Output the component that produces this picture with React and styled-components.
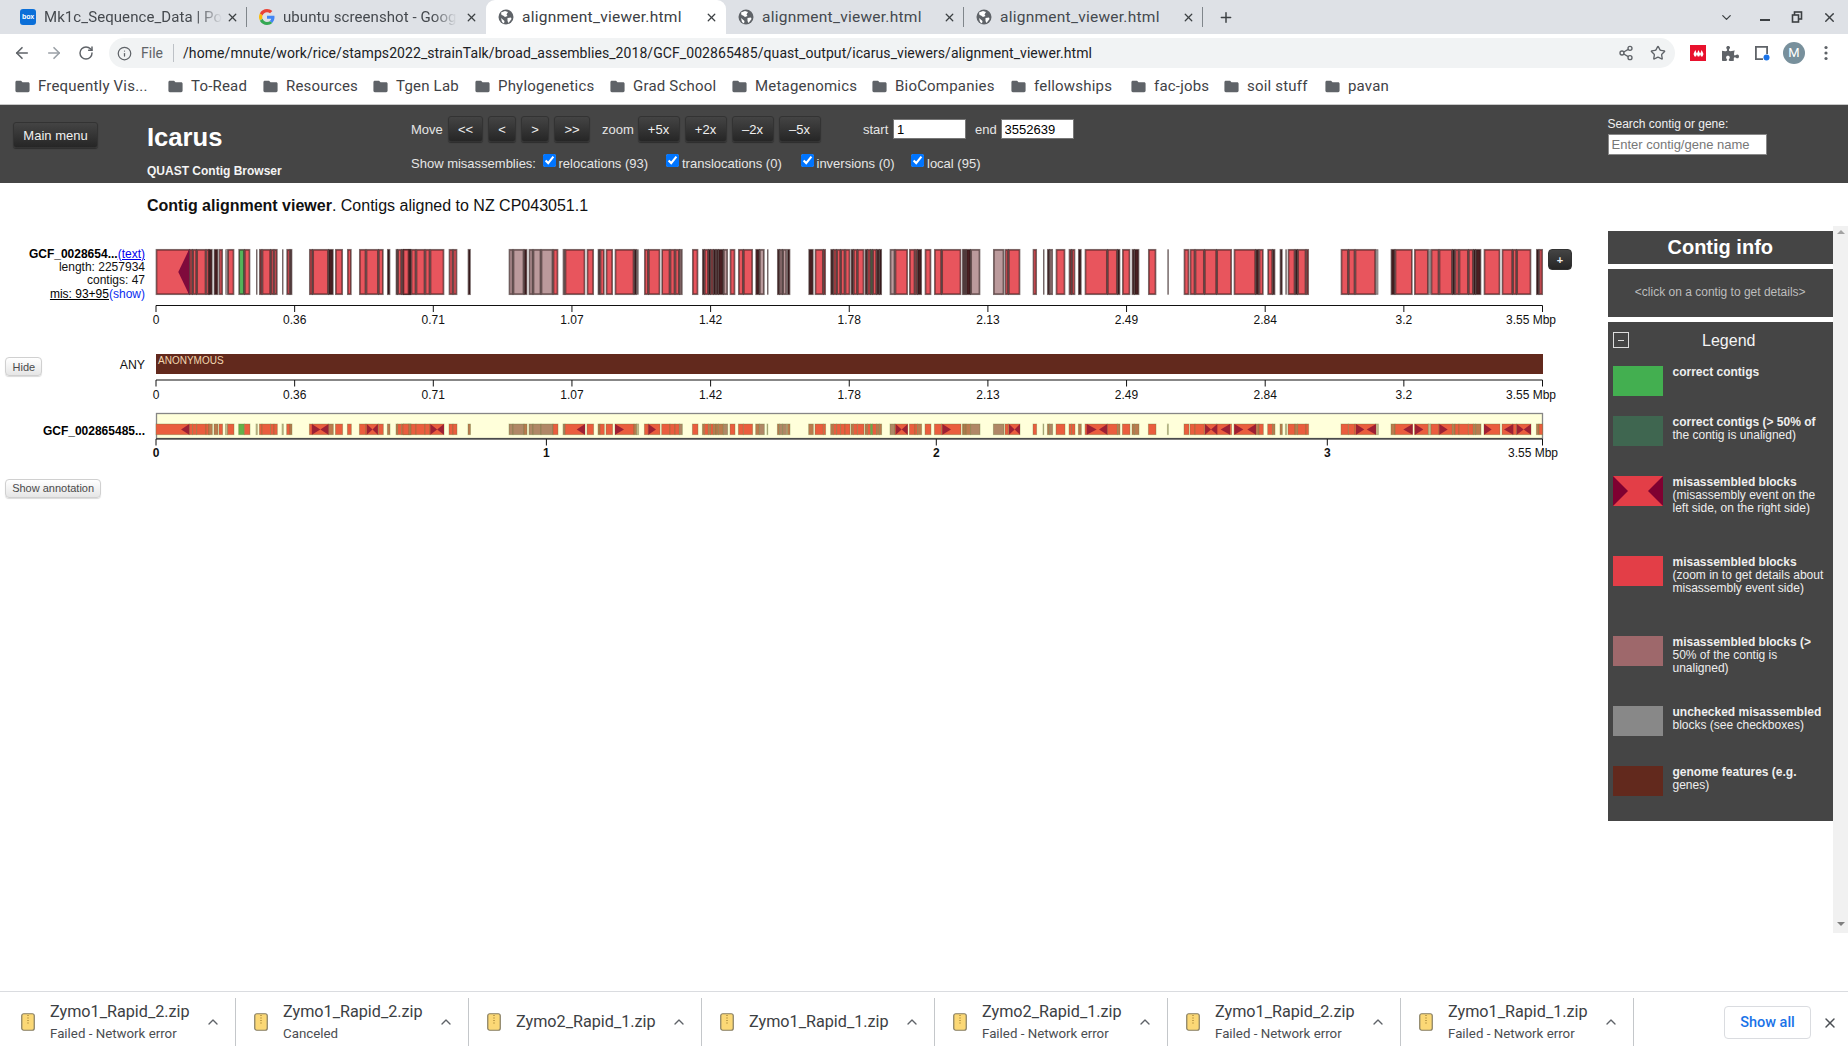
import React from "react";
import styled, { createGlobalStyle } from "styled-components";
import { ArrowLeft, ArrowRight, RotateCw, Info, Share2, Star, X, Plus, ChevronDown, ChevronUp } from "lucide-react";
import { MdFolder } from "react-icons/md";
import { FaPuzzlePiece } from "react-icons/fa";

const UI = `Roboto, "Noto Sans", sans-serif`;

const Global = createGlobalStyle`
  html, body { margin: 0; padding: 0; height: 100%; overflow: hidden; background: #fff; }
  body { font-family: "Liberation Sans", Arial, sans-serif; }
  * { box-sizing: border-box; }
`;

const Page = styled.div`
  width: 1848px; height: 1053px; display: flex; flex-direction: column;
`;

/* ---------- tab strip ---------- */
const TabStrip = styled.div`
  height: 34px; background: #dee1e6; display: flex; align-items: stretch; padding-left: 8px;
  font-family: ${UI}; font-size: 15.5px; letter-spacing: 0.25px; color: #3c4043; flex: none;
`;
const Tab = styled.div`
  position: relative; width: ${p => p.$w}px; display: flex; align-items: center; padding: 0 7px 0 12px;
  background: ${p => (p.$active ? "#fff" : "transparent")};
  border-radius: ${p => (p.$active ? "9px 9px 0 0" : "0")};
  color: ${p => (p.$active ? "#3c4043" : "#45494e")};
  &::after {
    content: ""; position: absolute; right: 0; top: 7px; height: 20px; width: 1px;
    background: ${p => (p.$sep ? "#80868b" : "transparent")};
  }
`;
const TabIcon = styled.span`
  width: 16px; height: 16px; flex: none; display: flex; align-items: center; justify-content: center;
  margin-right: 8px;
`;
const TabTitle = styled.span`
  flex: 1; white-space: nowrap;
`;
const FadedTitle = styled.span`
  white-space: nowrap; font-size: 15px; letter-spacing: 0.08px;
  mask-image: linear-gradient(to right, #000 86%, transparent 100%);
`;
const TitleBox = styled.span`
  flex: 1; min-width: 0; display: flex;
`;
const TabClose = styled.span`
  width: 16px; height: 16px; flex: none; display: flex; align-items: center; justify-content: center; color: #3c4043;
`;
const NewTab = styled.span`
  margin-left: 15px; width: 16px; display: flex; align-items: center; justify-content: center; color: #3c4043;
`;
const WindowControls = styled.div`
  margin-left: auto; display: flex; align-items: center; padding-right: 2px;
`;
const WindowBtn = styled.span`
  width: 32.6px; height: 34px; display: flex; align-items: center; justify-content: center; color: #3c4043;
  margin-right: ${p => p.$mr || 0}px;
`;
const BoxIcon = styled.span`
  width: 16px; height: 16px; border-radius: 3px; background: #0b6fd8; color: #fff; font: 700 7px/16px "Liberation Sans", sans-serif;
  text-align: center; letter-spacing: -0.2px;
`;

/* ---------- toolbar ---------- */
const Toolbar = styled.div`
  height: 38px; background: #fff; display: flex; align-items: center; padding-left: 6px; flex: none;
  font-family: ${UI};
`;
const NavBtn = styled.span`
  width: 32px; height: 30px; display: flex; align-items: center; justify-content: center;
  color: ${p => p.$off ? "#9aa0a6" : "#5f6368"};
`;
const Omnibox = styled.div`
  width: 1566px; height: 30px; margin-left: 7px; margin-right: 7px; background: #f1f3f4; border-radius: 15px;
  display: flex; align-items: center; padding: 0 1px 0 8px; font-size: 14px; color: #202124;
`;
const OmniFile = styled.span`
  color: #5f6368; margin-left: 9px; width: 32px;
`;
const OmniSep = styled.span`
  width: 1px; height: 18px; background: #bdc1c6;
`;
const OmniUrl = styled.span`
  flex: 1; margin-left: 9px; white-space: nowrap; letter-spacing: 0.075px;
`;
const OmniAction = styled.span`
  width: 32px; display: flex; align-items: center; justify-content: center; color: #5f6368;
`;
const Extension = styled.span`
  width: 32px; height: 30px; display: flex; align-items: center; justify-content: center; color: #5f6368;
`;
const MendeleyIcon = styled.span`
  width: 16px; height: 16px; background: #e8112d; display: flex; align-items: center; justify-content: center;
`;
const Avatar = styled.span`
  width: 22px; height: 22px; border-radius: 50%; background: #78909c; color: #fff; font: 13px/22px ${UI}; text-align: center;
`;

/* ---------- bookmarks ---------- */
const Bookmarks = styled.div`
  height: 33px; background: #fff; display: flex; align-items: center; padding: 0 0 4px 14px; flex: none;
  border-bottom: 1px solid #c8c8c8; font-family: ${UI}; font-size: 15px; letter-spacing: 0.2px; color: #3c4043;
`;
const Bookmark = styled.span`
  width: ${p => p.$w}px; flex: none; display: flex; align-items: center; gap: 7px; white-space: nowrap; color: #3f4246;
  svg { color: #5f6368; flex: none; }
`;

/* ---------- icarus header ---------- */
const Header = styled.div`
  height: 78px; background: #454545; display: flex; flex: none; color: #e6e6e6; font-size: 13px;
`;
const MenuCol = styled.div`
  width: 147px; padding: 17px 0 0 13px;
`;
const DarkButton = styled.button`
  width: ${p => p.$w}px; height: ${p => p.$h || 26}px; padding: 0; border: 1px solid #333; border-radius: 3px;
  background: linear-gradient(#444444, #262626); color: #f0f0f0;
  font: 13px "Liberation Sans", sans-serif; box-shadow: 0 1px 1px rgba(0,0,0,.35);
`;
const BrandCol = styled.div`
  width: 264px; padding-top: 17px;
`;
const Brand = styled.div`
  font-size: 25.6px; font-weight: 700; line-height: 30px; color: #fff;
`;
const SubBrand = styled.div`
  margin-top: 12px; font-size: 12px; font-weight: 700; line-height: 14px; color: #f4f4f4;
`;
const Controls = styled.div`
  flex: 1; padding-top: 11px;
`;
const ControlRow = styled.div`
  display: flex; align-items: center; height: 26px;
`;
const CtlText = styled.span`
  width: ${p => p.$w}px; margin-left: ${p => p.$ml || 0}px; flex: none; white-space: nowrap;
`;
const BtnGroup = styled.div`
  display: flex; gap: 5px;
`;
const RangeInput = styled.input`
  width: ${p => p.$w}px; height: 20px; border: 1px solid #777; padding: 0 3px; background: #fff; color: #000;
  font: 13px "Liberation Sans", sans-serif; outline: none;
`;
const MisRow = styled.div`
  display: flex; align-items: center; height: 14px; margin-top: 14px;
`;
const CheckItem = styled.label`
  width: ${p => p.$w}px; flex: none; display: flex; align-items: center; gap: 3px; white-space: nowrap;
  input { margin: -5px 0 0; width: 13px; height: 13px; accent-color: #0075ff; }
`;
const SearchCol = styled.div`
  width: 240.5px; padding-top: 12px; font-size: 12px; line-height: 14px; color: #f0f0f0;
`;
const SearchInput = styled.input`
  display: block; margin-top: 3px; width: 159px; height: 21px; border: 1px solid #888; padding: 0 3px;
  font: 13px "Liberation Sans", sans-serif; background: #fff;
  &::placeholder { color: #777; opacity: 1; }
`;

/* ---------- body ---------- */
const Body = styled.div`
  flex: 1; min-height: 0; display: flex; background: #fff;
`;
const Main = styled.div`
  width: 1607.5px; flex: none; padding-top: 13px;
`;
const Title = styled.div`
  padding-left: 147px; font-size: 16px; line-height: 20px; color: #111; margin-bottom: 33px;
  b { font-weight: 700; }
`;
const TrackRow = styled.div`
  display: flex; align-items: flex-start; margin-bottom: ${p => p.$mb || 0}px;
`;
const LabelCol = styled.div`
  width: 156px; flex: none; padding-right: 11px; text-align: right; font-size: 12px; line-height: 13.4px; color: #111;
  padding-top: ${p => p.$pt || 0}px; margin-top: ${p => p.$mt || 0}px;
  b { font-weight: 700; color: #000; }
  a { color: #0000ee; text-decoration: underline; }
`;
const MisLink = styled.span`
  text-decoration: underline; color: #000;
`;
const ShowLink = styled.a`
  color: #0a2cf0 !important; text-decoration: none !important;
`;
const HideLine = styled.div`
  display: flex; align-items: center; justify-content: space-between; padding: 3.2px 0 0 5.4px;
`;
const LightButton = styled.button`
  width: ${p => p.$w}px; height: 19px; padding: 0; border: 1px solid #d0d0d0; border-radius: 4px;
  background: linear-gradient(#ffffff, #e6e6e6); color: #4a4a4a; font: 11px "Liberation Sans", sans-serif;
  box-shadow: 0 1px 1px rgba(0,0,0,.15);
`;
const AnyText = styled.span`
  font-size: 12.3px; line-height: 14px; color: #111; margin-top: -4px;
`;
const Chart = styled.svg`
  display: block; flex: none; overflow: visible; font-family: "Liberation Sans", sans-serif;
`;
const PlusButton = styled.button`
  width: 24px; height: 21px; padding: 0; flex: none; border: 1px solid #333; border-radius: 4px;
  background: linear-gradient(#444, #262626); color: #eee; font: 700 11px/18px "Liberation Sans", sans-serif;
`;
const AnnotationLine = styled.div`
  margin: 18.2px 0 0 5.4px;
`;

/* ---------- side panel ---------- */
const Side = styled.div`
  flex: 1; display: flex; align-items: flex-start; padding-top: 42.5px;
`;
const SideCol = styled.div`
  width: 225.5px; padding-top: 5.5px; display: flex; flex-direction: column; gap: 5px; flex: none;
`;
const InfoHead = styled.div`
  height: 33px; background: #454545; color: #fff; text-align: center; font-size: 20px; font-weight: 700; line-height: 32px;
`;
const InfoBox = styled.div`
  height: 48px; background: #454545; color: #bdbdbd; text-align: center; font-size: 12px; line-height: 47px;
`;
const Legend = styled.div`
  height: 499px; background: #454545; padding: 10.3px 5px 0; color: #eeeeee; font-size: 12px; line-height: 13px;
`;
const LegendHead = styled.div`
  display: flex; align-items: center; height: 15.7px; margin-bottom: 18px; color: #f4f4f4;
`;
const Collapse = styled.span`
  width: 16px; height: 15.7px; border: 1px solid #ddd; display: flex; align-items: center; justify-content: center; flex: none;
  &::before { content: ""; width: 6px; height: 1px; background: #ddd; }
`;
const LegendTitle = styled.span`
  flex: 1; text-align: center; font-size: 16px; padding-left: 5px; padding-right: 4px; line-height: 15px;
`;
const LegendItem = styled.div`
  height: ${p => p.$h}px; display: flex; align-items: flex-start;
`;
const Swatch = styled.span`
  width: 50px; height: 30px; flex: none; background: ${p => p.$c}; margin-right: 10px; display: block;
`;
const SwatchDraw = styled.svg`
  width: 50px; height: 30px; flex: none; margin-right: 10px; display: block;
`;
const LegendText = styled.div`
  b { font-weight: 700; }
`;
const ScrollTrack = styled.div`
  width: 15px; height: 707.5px; background: #f1f1f1; flex: none; display: flex; flex-direction: column;
  justify-content: space-between; align-items: center; padding: 4px 0 7px;
`;
const ScrollArrow = styled.span`
  width: 0; height: 0; border-left: 4px solid transparent; border-right: 4px solid transparent;
  ${p => p.$up ? "border-bottom: 4px solid #a3a3a3;" : "border-top: 4px solid #808080;"}
`;

/* ---------- downloads ---------- */
const Downloads = styled.div`
  height: 62px; flex: none; background: #fff; border-top: 1.5px solid #dadce0; display: flex; align-items: center;
  padding-left: 3px; font-family: ${UI}; color: #3c4043;
`;
const Download = styled.div`
  width: 233px; height: 48px; flex: none; border-right: 1px solid #c4c7ca; display: flex; align-items: center;
  padding-left: 18px; position: relative; margin-top: -1px;
`;
const DownloadText = styled.div`
  margin-left: 15px; flex: 1;
`;
const DownloadName = styled.div`
  font-size: 16.2px; line-height: 20px; color: #3c4043; white-space: nowrap;
`;
const DownloadStatus = styled.div`
  font-size: 13.3px; line-height: 16px; margin-top: 4px; color: #4a4d51; white-space: nowrap;
`;
const DownloadChevron = styled.span`
  width: 16px; margin-right: 14px; display: flex; justify-content: center; color: #5f6368;
`;
const ShowAll = styled.button`
  width: 87px; height: 33px; margin-left: auto; border: 1px solid #dadce0; border-radius: 4px; background: #fff;
  color: #1a73e8; font: 500 14.5px ${UI}; padding: 0;
`;
const CloseBar = styled.span`
  width: 37px; display: flex; justify-content: center; color: #4b4f54;
`;

/* ---------- icons ---------- */
const Globe = () => (
  <svg width="16" height="16" viewBox="0 0 16 16">
    <circle cx="8" cy="8" r="7.5" fill="#5f6368" />
    <path d="M3 3.5 L7 2 L10 3 L8.5 5.5 L9.5 7 L7 8 L5 6.5 L3.5 6 Z M9.5 9 L13 8.5 L13.5 10 L10.5 14 L9.5 12 Z M3 9 L6.5 12 L6 14.5 L4 13 Z" fill="#fff" />
  </svg>
);
const GoogleG = () => (
  <svg width="16" height="16" viewBox="0 0 48 48">
    <path fill="#EA4335" d="M24 9.5c3.5 0 6.7 1.2 9.2 3.6l6.9-6.9C35.9 2.4 30.4 0 24 0 14.6 0 6.5 5.4 2.6 13.2l8 6.2C12.5 13.6 17.800 9.500 24 9.500z" />
    <path fill="#4285F4" d="M46.500 24.500c0-1.600-.100-3.100-.400-4.500H24v9h12.700c-.500 2.900-2.200 5.400-4.700 7l7.300 5.700c4.300-4 7.200-9.800 7.200-17.200z" />
    <path fill="#FBBC05" d="M10.500 28.600c-.500-1.400-.800-3-.800-4.600s.300-3.200.800-4.600l-8-6.200C.900 16.500 0 20.100 0 24s.900 7.500 2.600 10.800l7.900-6.200z" />
    <path fill="#34A853" d="M24 48c6.500 0 11.900-2.100 15.900-5.800L32.600 36.500c-2.200 1.500-4.900 2.300-8.600 2.300-6.200 0-11.500-4.100-13.400-9.900l-8 6.200C6.500 42.600 14.600 48 24 48z" />
  </svg>
);
const Restore = () => (
  <svg width="12" height="12" viewBox="0 0 12 12" fill="none" stroke="currentColor" strokeWidth="1.6">
    <rect x="3.5" y="1" width="7" height="7" />
    <rect x="1.500" y="4" width="6" height="7" fill="#dee1e6" />
  </svg>
);
const MinIcon = () => (
  <svg width="12" height="12" viewBox="0 0 12 12"><rect x="1" y="8" width="10" height="2" fill="currentColor" /></svg>
);
const ReadingList = () => (
  <svg width="18" height="18" viewBox="0 0 18 18">
    <path d="M2 2 H15 V10 H13.200 V3.800 H3.800 V14.200 H10 V16 H2 Z" fill="#5f6368" />
    <circle cx="13.500" cy="13.500" r="3" fill="#1a73e8" />
  </svg>
);
const Mendeley = () => (
  <svg width="13" height="9" viewBox="0 0 13 9" fill="#fff">
    <path d="M3.300 1 L5 5 L4 7.500 H2.500 L1.500 5 Z M6.500 1 L8.300 5 L7.300 7.500 H5.700 L4.700 5 Z M9.700 1 L11.500 5 L10.500 7.500 H9 L8 5 Z" />
  </svg>
);
const Dots = () => (
  <svg width="4" height="16" viewBox="0 0 4 16" fill="#5f6368"><circle cx="2" cy="2.500" r="1.600" /><circle cx="2" cy="8" r="1.600" /><circle cx="2" cy="13.500" r="1.600" /></svg>
);
const ZipIcon = () => (
  <svg width="14" height="18" viewBox="0 0 14 18" style={{ flex: "none" }}>
    <rect x="0.750" y="0.750" width="12.500" height="16.500" rx="2" fill="#fbd876" stroke="#857c61" strokeWidth="1.200" />
    <path d="M7 2 V3 M7 4.500 V5.500 M7 7 V8 M7 9.500 V10.500" stroke="#8a6a20" strokeWidth="1" />
  </svg>
);

/* ---------- chart data ---------- */
const L = 156, R = 1542.5;
const fromZ = (off, s, list) => list.map(([a, b, t]) => [off + a / s, off + b / s, t || "r"]);
const BLOCKS = [
  ...fromZ(150, 3, [[18,118],[118,128],[128,140],[140,168],[168,178],[176,187,"d"],[192,204,"d"],[207,218],[226,233,"l"],[233,252],[266,283,"g"],[283,300],[318,322,"l"],[328,336],[336,362],[362,372],[372,382],[396,400,"l"],[410,420],[420,426,"d"],[478,488],[488,535],[535,550,"d"],[556,578],[592,604],[628,648],[648,685],[685,700],[712,720,"d"],[738,743,"d"],[743,755],[755,760],[760,782]]),
  ...fromZ(0, 1, [[403,409],[409,411,"d"],[411,416],[416,425],[425,430],[430,444],[449,453],[453,457],[468,470.500,"d"],[509,513,"p"],[513,524,"p"],[524,527,"d"],[529,533,"p"],[533,541,"p"],[541,553,"p"],[553,558]]),
  ...fromZ(560, 3, [[9,15,"p"],[15,75],[81,101],[114,120,"d"],[120,133],[138,158],[165,222],[222,230,"d"],[230,236,"l"],[253,265],[265,300],[305,330],[330,345],[345,358],[358,367,"p"],[397,414],[427,433,"d"],[433,445],[445,452,"d"],[452,460],[460,468,"d"],[468,475,"d"],[475,490,"d"],[490,503,"p"],[510,525],[535,550],[550,578],[587,598,"d"],[598,613,"p"],[621,623,"l"],[652,658,"d"],[658,668,"p"],[668,680,"p"],[682,690,"d"],[746,760,"d"],[765,790],[790,797],[812,820,"d"],[820,830],[830,842],[842,855],[855,870],[873,880,"d"],[880,892],[892,912],[915,922,"d"],[922,932],[932,938,"g"],[938,950],[950,958,"d"],[958,965,"d"],[990,1005,"p"],[1005,1043],[1048,1065],[1065,1072],[1072,1085,"d"],[1095,1113],[1123,1145],[1145,1203],[1207,1212,"d"],[1212,1218,"d"],[1218,1232,"d"],[1232,1260,"p"],[1300,1332,"p"],[1335,1345],[1345,1380],[1419,1430],[1449,1451,"l"],[1462,1468,"d"],[1468,1478,"p"],[1488,1515],[1527,1535],[1535,1545],[1555,1564,"d"]]),
  ...fromZ(1080, 3, [[15,82],[82,112],[112,120,"d"],[127,150],[156,163,"d"],[163,177,"d"],[205,228],[262,265,"l"],[312,327],[330,345],[345,373],[373,410],[410,455],[462,527],[527,537,"d"],[537,550],[563,578],[578,585,"d"],[600,607,"d"],[616,620,"l"],[624,645],[645,653,"d"],[653,678],[678,686],[783,805],[805,825],[825,887],[887,895,"l"],[933,945,"d"],[945,997],[1003,1045],[1045,1052,"l"],[1053,1077],[1077,1117],[1117,1125,"d"],[1125,1137],[1137,1165],[1165,1180],[1180,1187,"d"],[1187,1203,"d"],[1212,1260],[1266,1298],[1298,1310],[1310,1353],[1369,1377,"d"],[1377,1388]]),
];
const TOP_FILL = { r: "#e8555d", p: "#bb9a9c", g: "#55b45a", d: "#4a1f22", l: "#d8d8d8" };
const OV_FILL = { r: "#ea5d3e", p: "#b08766", g: "#64b04a", d: "#bb7a4e", l: "#c9b98d" };

// arrows in overview: [apex, base]; apex to the left of base means "◀"
const ARROWS = [
  ...fromZ(0, 2.8, [[507,530],[897,873],[897,920],[1043,1027],[1043,1058],[1224,1205],[1224,1243]]),
  ...fromZ(560, 3, [[50,75],[192,165],[288,265],[1025,1007],[1025,1043],[1173,1147],[1364,1347],[1364,1380]]),
  ...fromZ(1080, 3, [[50,20],[57,82],[393,375],[393,412],[422,450],[490,463],[502,528],[853,828],[860,888],[970,998],[1030,1005],[1103,1078],[1235,1212],[1272,1300],[1331,1310],[1331,1353]]),
];
const TICKS_A = ["0","0.36","0.71","1.07","1.42","1.78","2.13","2.49","2.84","3.2"].map((t, i) => [L + 138.65 * i, t]);

const Axis = ({ y, ticks, end, bold, endOffset, labelY }) => (
  <g>
    <line x1={L - L} x2={R - L} y1={y} y2={y} stroke="#111" strokeWidth="1.200" />
    {[...ticks.map(t => t[0]), R].map(x => <line key={x} x1={x - L} x2={x - L} y1={y} y2={y + 6.500} stroke="#111" strokeWidth="1" />)}
    {ticks.map(([x, t]) => (
      <text key={t} x={x - L} y={labelY} textAnchor="middle" fontSize="12" fontWeight={bold ? 700 : 400} fill="#111">{t}</text>
    ))}
    <text x={R - L + endOffset} y={labelY} textAnchor="end" fontSize="12" fill="#111">{end}</text>
  </g>
);

const TopTrack = () => (
  <Chart width="1392" height="86">
    {BLOCKS.map(([a, b, t], i) => (
      <rect key={i} x={a - L + 0.500} y={0.800} width={Math.max(b - a - 1, 0.500)} height={44.400}
        fill={TOP_FILL[t]} stroke="rgba(45,25,25,.62)" strokeWidth={t === "l" ? 1 : 1.700} />
    ))}
    <polygon points="33.300,0 22.300,23 33.300,46" fill="#7f0a3c" />
    <Axis y={56.500} ticks={TICKS_A} end="3.55 Mbp" endOffset={13.500} labelY={74.500} />
  </Chart>
);

const FeatureTrack = () => (
  <Chart width="1392" height="51">
    <rect x="0" y="0" width="1387" height="20" fill="#62291d" />
    <text x="2" y="9.500" fontSize="10" fill="#f2d7b0">ANONYMOUS</text>
    <Axis y={26} ticks={TICKS_A} end="3.55 Mbp" endOffset={13.500} labelY={44.500} />
  </Chart>
);

const OVERVIEW_TICKS = [[L, "0"], [546.4, "1"], [936.3, "2"], [1327.3, "3"]];
const Overview = () => (
  <Chart width="1392" height="47">
    <rect x="0.500" y="0.500" width="1386" height="25" fill="#ffffda" stroke="#868686" strokeWidth="1.300" />
    {BLOCKS.map(([a, b, t], i) => (
      <rect key={i} x={a - L} y={11} width={Math.max(b - a, 0.800)} height={10.700}
        fill={OV_FILL[t]} stroke="rgba(100,120,60,.42)" strokeWidth={0.800} />
    ))}
    {ARROWS.map(([a, b], i) => (
      <polygon key={i} points={`${b - L},11 ${a - L},16.400 ${b - L},21.700`} fill="#9c2033" />
    ))}
    <Axis y={26} ticks={OVERVIEW_TICKS} bold end="3.55 Mbp" endOffset={15.500} labelY={44} />
  </Chart>
);

/* ---------- content lists ---------- */
const TABS = [
  { w: 239, title: "Mk1c_Sequence_Data | Po", icon: <BoxIcon>box</BoxIcon>, sep: true, fade: true },
  { w: 239, title: "ubuntu screenshot - Goog", icon: <GoogleG />, fade: true },
  { w: 240, title: "alignment_viewer.html", icon: <Globe />, active: true },
  { w: 238, title: "alignment_viewer.html", icon: <Globe />, sep: true },
  { w: 239, title: "alignment_viewer.html", icon: <Globe />, sep: true },
];
const MARKS = [
  ["Frequently Vis...", 153], ["To-Read", 95], ["Resources", 110], ["Tgen Lab", 102], ["Phylogenetics", 135], ["Grad School", 122],
  ["Metagenomics", 140], ["BioCompanies", 139], ["fellowships", 120], ["fac-jobs", 93], ["soil stuff", 101], ["pavan", 60],
];
const DOWNLOADS = [
  ["Zymo1_Rapid_2.zip", "Failed - Network error"], ["Zymo1_Rapid_2.zip", "Canceled"], ["Zymo2_Rapid_1.zip"], ["Zymo1_Rapid_1.zip"],
  ["Zymo2_Rapid_1.zip", "Failed - Network error"], ["Zymo1_Rapid_2.zip", "Failed - Network error"], ["Zymo1_Rapid_1.zip", "Failed - Network error"],
];
const LEGEND = [
  { h: 50, c: "#43af50", b: "correct contigs", t: "" },
  { h: 60, c: "#3f6650", b: "correct contigs (> 50% of", t: "the contig is unaligned)" },
  { h: 80, draw: true, b: "misassembled blocks", t: "(misassembly event on the left side, on the right side)" },
  { h: 80, c: "#e33e47", b: "misassembled blocks", t: "(zoom in to get details about misassembly event side)" },
  { h: 70, c: "#9e686b", b: "misassembled blocks (>", t: "50% of the contig is unaligned)" },
  { h: 60, c: "#888888", b: "unchecked misassembled", t: "blocks (see checkboxes)" },
  { h: 50, c: "#62291d", b: "genome features (e.g.", t: "genes)" },
];

export default function App() {
  return (
    <Page>
      <Global />
      <TabStrip>
        {TABS.map((t, i) => (
          <Tab key={i} $w={t.w} $active={t.active} $sep={t.sep}>
            <TabIcon>{t.icon}</TabIcon>
            {t.fade
              ? <TitleBox><FadedTitle>{t.title}</FadedTitle></TitleBox>
              : <TabTitle>{t.title}</TabTitle>}
            <TabClose><X size={13} strokeWidth={2.4} /></TabClose>
          </Tab>
        ))}
        <NewTab><Plus size={17} strokeWidth={2.200} /></NewTab>
        <WindowControls>
          <WindowBtn $mr={5}><ChevronDown size={15} strokeWidth={2} /></WindowBtn>
          <WindowBtn><MinIcon /></WindowBtn>
          <WindowBtn><Restore /></WindowBtn>
          <WindowBtn><X size={15} strokeWidth={2.200} /></WindowBtn>
        </WindowControls>
      </TabStrip>

      <Toolbar>
        <NavBtn><ArrowLeft size={18} strokeWidth={2.200} /></NavBtn>
        <NavBtn $off><ArrowRight size={18} strokeWidth={2.200} /></NavBtn>
        <NavBtn><RotateCw size={16} strokeWidth={2.200} /></NavBtn>
        <Omnibox>
          <Info size={15} color="#5f6368" strokeWidth={2} />
          <OmniFile>File</OmniFile>
          <OmniSep />
          <OmniUrl>/home/mnute/work/rice/stamps2022_strainTalk/broad_assemblies_2018/GCF_002865485/quast_output/icarus_viewers/alignment_viewer.html</OmniUrl>
          <OmniAction><Share2 size={16} strokeWidth={2} /></OmniAction>
          <OmniAction><Star size={16} strokeWidth={2} /></OmniAction>
        </Omnibox>
        <Extension><MendeleyIcon><Mendeley /></MendeleyIcon></Extension>
        <Extension><FaPuzzlePiece size={17} /></Extension>
        <Extension><ReadingList /></Extension>
        <Extension><Avatar>M</Avatar></Extension>
        <Extension><Dots /></Extension>
      </Toolbar>

      <Bookmarks>
        {MARKS.map(([t, w]) => (
          <Bookmark key={t} $w={w}><MdFolder size={17} />{t}</Bookmark>
        ))}
      </Bookmarks>

      <Header>
        <MenuCol><DarkButton $w={85}>Main menu</DarkButton></MenuCol>
        <BrandCol>
          <Brand>Icarus</Brand>
          <SubBrand>QUAST Contig Browser</SubBrand>
        </BrandCol>
        <Controls>
          <ControlRow>
            <CtlText $w={37}>Move</CtlText>
            <BtnGroup>
              <DarkButton $w={35}>&lt;&lt;</DarkButton>
              <DarkButton $w={28}>&lt;</DarkButton>
              <DarkButton $w={28}>&gt;</DarkButton>
              <DarkButton $w={36}>&gt;&gt;</DarkButton>
            </BtnGroup>
            <CtlText $w={35.500} $ml={12}>zoom</CtlText>
            <BtnGroup>
              <DarkButton $w={42}>+5x</DarkButton>
              <DarkButton $w={42}>+2x</DarkButton>
              <DarkButton $w={42}>–2x</DarkButton>
              <DarkButton $w={42}>–5x</DarkButton>
            </BtnGroup>
            <CtlText $w={30} $ml={42.500}>start</CtlText>
            <RangeInput $w={73} defaultValue="1" />
            <CtlText $w={25.600} $ml={9}>end</CtlText>
            <RangeInput $w={73.400} defaultValue="3552639" />
          </ControlRow>
          <MisRow>
            <CtlText $w={131.500}>Show misassemblies:</CtlText>
            <CheckItem $w={123.500}><input type="checkbox" defaultChecked />relocations (93)</CheckItem>
            <CheckItem $w={134.500}><input type="checkbox" defaultChecked />translocations (0)</CheckItem>
            <CheckItem $w={110.500}><input type="checkbox" defaultChecked />inversions (0)</CheckItem>
            <CheckItem $w={80}><input type="checkbox" defaultChecked />local (95)</CheckItem>
          </MisRow>
        </Controls>
        <SearchCol>
          Search contig or gene:
          <SearchInput placeholder="Enter contig/gene name" />
        </SearchCol>
      </Header>

      <Body>
        <Main>
          <Title><b>Contig alignment viewer</b>. Contigs aligned to NZ CP043051.1</Title>
          <TrackRow $mb={19}>
            <LabelCol $mt={-1.500}>
              <b>GCF_0028654...</b><a href="#text">(text)</a><br />
              length: 2257934<br />
              contigs: 47<br />
              <MisLink>mis: 93+95</MisLink><ShowLink href="#show">(show)</ShowLink>
            </LabelCol>
            <TopTrack />
            <PlusButton>+</PlusButton>
          </TrackRow>
          <TrackRow $mb={8}>
            <LabelCol>
              <HideLine>
                <LightButton $w={37}>Hide</LightButton>
                <AnyText>ANY</AnyText>
              </HideLine>
            </LabelCol>
            <FeatureTrack />
          </TrackRow>
          <TrackRow>
            <LabelCol $pt={12}><b>GCF_002865485...</b></LabelCol>
            <Overview />
          </TrackRow>
          <AnnotationLine><LightButton $w={95.500}>Show annotation</LightButton></AnnotationLine>
        </Main>
        <Side>
          <SideCol>
            <InfoHead>Contig info</InfoHead>
            <InfoBox>&lt;click on a contig to get details&gt;</InfoBox>
            <Legend>
              <LegendHead><Collapse /><LegendTitle>Legend</LegendTitle></LegendHead>
              {LEGEND.map((l, i) => (
                <LegendItem key={i} $h={l.h}>
                  {l.draw ? (
                    <SwatchDraw viewBox="0 0 50 30">
                      <rect width="50" height="30" fill="#e33e47" />
                      <polygon points="0,0 15,15 0,30" fill="#7f0031" />
                      <polygon points="50,0 35,15 50,30" fill="#7f0031" />
                    </SwatchDraw>
                  ) : <Swatch $c={l.c} />}
                  <LegendText><b>{l.b}</b> {l.t}</LegendText>
                </LegendItem>
              ))}
            </Legend>
          </SideCol>
          <ScrollTrack><ScrollArrow $up /><ScrollArrow /></ScrollTrack>
        </Side>
      </Body>

      <Downloads>
        {DOWNLOADS.map(([n, s], i) => (
          <Download key={i}>
            <ZipIcon />
            <DownloadText>
              <DownloadName>{n}</DownloadName>
              {s && <DownloadStatus>{s}</DownloadStatus>}
            </DownloadText>
            <DownloadChevron><ChevronUp size={16} strokeWidth={2} /></DownloadChevron>
          </Download>
        ))}
        <ShowAll>Show all</ShowAll>
        <CloseBar><X size={16} strokeWidth={2.200} /></CloseBar>
      </Downloads>
    </Page>
  );
}
